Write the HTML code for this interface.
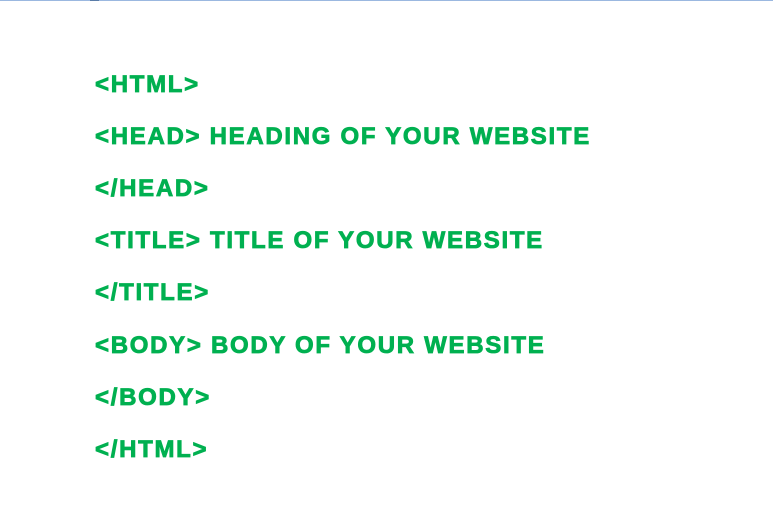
<!DOCTYPE html>
<html><head><style>
html,body{margin:0;padding:0;background:#fff;width:773px;height:516px;overflow:hidden;}
.top{position:absolute;left:0;top:0;width:773px;height:1px;background:#9bb8e0;}
.tk{position:absolute;left:90px;top:0;width:9px;height:1px;background:#5a7ca8;}
.l{position:absolute;left:95px;font-family:"Liberation Sans",Arial,sans-serif;font-weight:bold;font-size:24px;color:#00b050;line-height:1;white-space:nowrap;letter-spacing:1.7px;-webkit-text-stroke:0.8px #00b050;}
</style></head><body>
<div class="top"></div><div class="tk"></div>
<div class="l" style="top:73px">&lt;HTML&gt;</div>
<div class="l" style="top:125px">&lt;HEAD&gt; HEADING OF YOUR WEBSITE</div>
<div class="l" style="top:177px">&lt;/HEAD&gt;</div>
<div class="l" style="top:229px">&lt;TITLE&gt; TITLE OF YOUR WEBSITE</div>
<div class="l" style="top:281px">&lt;/TITLE&gt;</div>
<div class="l" style="top:334px">&lt;BODY&gt; BODY OF YOUR WEBSITE</div>
<div class="l" style="top:386px">&lt;/BODY&gt;</div>
<div class="l" style="top:438px">&lt;/HTML&gt;</div>
</body></html>
